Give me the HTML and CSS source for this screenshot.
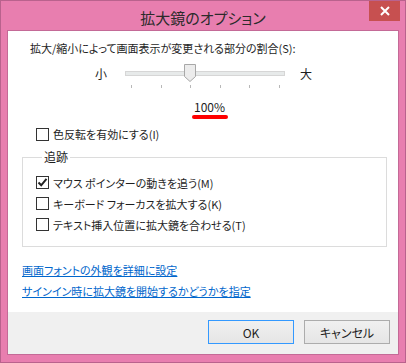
FILE: index.html
```html
<!DOCTYPE html>
<html lang="ja">
<head>
<meta charset="utf-8">
<title>拡大鏡のオプション</title>
<link rel="stylesheet" href="styles.css">
</head>
<body>
<div class="window">
  <div class="titlebar">
    <span></span>
    <span class="title">拡大鏡のオプション</span>
    <button class="close" aria-label="閉じる">
      <svg width="10" height="10" viewBox="0 0 10 10"><path d="M1 1 L9 9 M9 1 L1 9" stroke="#fff" stroke-width="2" fill="none"/></svg>
    </button>
  </div>
  <div class="client">
    <div class="content">
      <div class="label">拡大/縮小によって画面表示が変更される部分の割合(S):</div>
      <div class="slider-row">
        <span class="end">小</span>
        <div class="slider">
          <div class="track"></div>
          <svg class="thumb" width="12" height="18" viewBox="0 0 12 18"><path d="M0.5 0.5 H11.5 V12.5 L6 17.5 L0.5 12.5 Z" fill="#ececec" stroke="#a8a8a8"/></svg>
          <div class="ticks"><i></i><i></i><i></i><i></i><i></i><i></i></div>
        </div>
        <span class="end">大</span>
      </div>
      <div class="value">100%</div>
      <div class="mark"></div>
      <label class="check inv"><span class="box"></span>色反転を有効にする(I)</label>
      <fieldset class="group">
        <legend>追跡</legend>
        <label class="check"><span class="box"><svg width="11" height="11" viewBox="0 0 11 11"><path d="M1.5 5.5 L4.2 8.3 L9.5 1.8" stroke="#222" stroke-width="2" fill="none"/></svg></span>マウス ポインターの動きを追う(M)</label>
        <label class="check"><span class="box"></span>キーボード フォーカスを拡大する(K)</label>
        <label class="check"><span class="box"></span>テキスト挿入位置に拡大鏡を合わせる(T)</label>
      </fieldset>
      <div class="links">
        <a href="#">画面フォントの外観を詳細に設定</a>
        <a href="#">サインイン時に拡大鏡を開始するかどうかを指定</a>
      </div>
    </div>
    <div class="footer">
      <button class="btn default">OK</button>
      <button class="btn">キャンセル</button>
    </div>
  </div>
</div>
</body>
</html>
```

FILE: styles.css
```css
* { box-sizing: border-box; }
html, body { margin: 0; padding: 0; }
body {
  font-family: "Noto Sans CJK JP", "Noto Sans", sans-serif;
  font-size: 11px;
  color: #1e1e1e;
  font-feature-settings: "palt";
}
.window {
  width: 406px;
  height: 363px;
  background: #e87eaf;
  border: 1px solid #b9628d;
  display: flex;
  flex-direction: column;
}
.titlebar {
  height: 29px;
  display: grid;
  grid-template-columns: 1fr auto 1fr;
  align-items: start;
}
.title {
  font-size: 15px;
  line-height: 17px;
  margin-top: 8px;
  color: #2b2b2b;
}
.close {
  justify-self: end;
  margin-right: 5px;
  width: 31px;
  height: 20px;
  border: 0;
  padding: 0;
  background: #c75050;
  display: flex;
  align-items: center;
  justify-content: center;
}
.client {
  margin: 0 6px 0 6px;
  border: 1px solid #c46a97;
  background: #fff;
  display: flex;
  flex-direction: column;
}
.content {
  height: 281px;
  padding: 9px 11px 0 14px;
  display: flex;
  flex-direction: column;
}
.label {
  line-height: 16px;
  padding-left: 8px;
}
.slider-row {
  display: flex;
  align-items: flex-start;
  margin-top: 8px;
  height: 25px;
  padding-left: 73px;
}
.end {
  line-height: 16px;
  margin-top: 2px;
  width: 30px;
  font-size: 12px;
}
.slider-row .end:last-child { margin-left: 15px; }
.slider {
  position: relative;
  width: 160px;
  height: 25px;
}
.track {
  margin-top: 7px;
  height: 5px;
  background: #e7eaea;
  border: 1px solid #d6d6d6;
}
.thumb {
  position: absolute;
  left: 59px;
  top: 0;
}
.ticks {
  display: flex;
  justify-content: space-between;
  margin: 9px 5px 0 6px;
}
.ticks i {
  width: 1px;
  height: 3px;
  background: #b8b8b8;
}
.value {
  margin-top: 10px;
  line-height: 16px;
  padding-left: 172px;
  font-size: 12px;
}
.mark {
  margin-left: 170px;
  width: 36px;
  height: 4px;
  border-radius: 2px;
  background: #ff0000;
}
.check {
  display: flex;
  align-items: center;
  gap: 4px;
  line-height: 16px;
}
.box {
  width: 13px;
  height: 13px;
  border: 1px solid #333;
  background: #fff;
  display: flex;
  align-items: center;
  justify-content: center;
}
.inv {
  margin-top: 7px;
  padding-left: 14px;
}
.group {
  margin: 7px 0 0 0;
  padding: 7px 0 11px 13px;
  border: 1px solid #dcdcdc;
  min-width: 0;
}
.group legend {
  padding: 0 2px;
  margin-left: 6px;
  line-height: 16px;
  font-size: 12px;
}
.group .check {
  height: 21px;
}
.links {
  margin-top: 13px;
  display: flex;
  flex-direction: column;
  align-items: flex-start;
}
.links a {
  color: #0066cc;
  line-height: 21px;
  text-decoration: underline;
}
.footer {
  height: 42px;
  background: #f0f0f0;
  display: flex;
  justify-content: flex-end;
  align-items: flex-start;
  gap: 10px;
  padding: 8px 8px 0 0;
}
.btn {
  width: 86px;
  height: 24px;
  font: inherit;
  font-size: 12px;
  color: #1e1e1e;
  background: linear-gradient(#f0f0f0, #e5e5e5);
  border: 1px solid #acacac;
  padding: 0;
}
.btn.default {
  border-color: #3399ff;
}
```
